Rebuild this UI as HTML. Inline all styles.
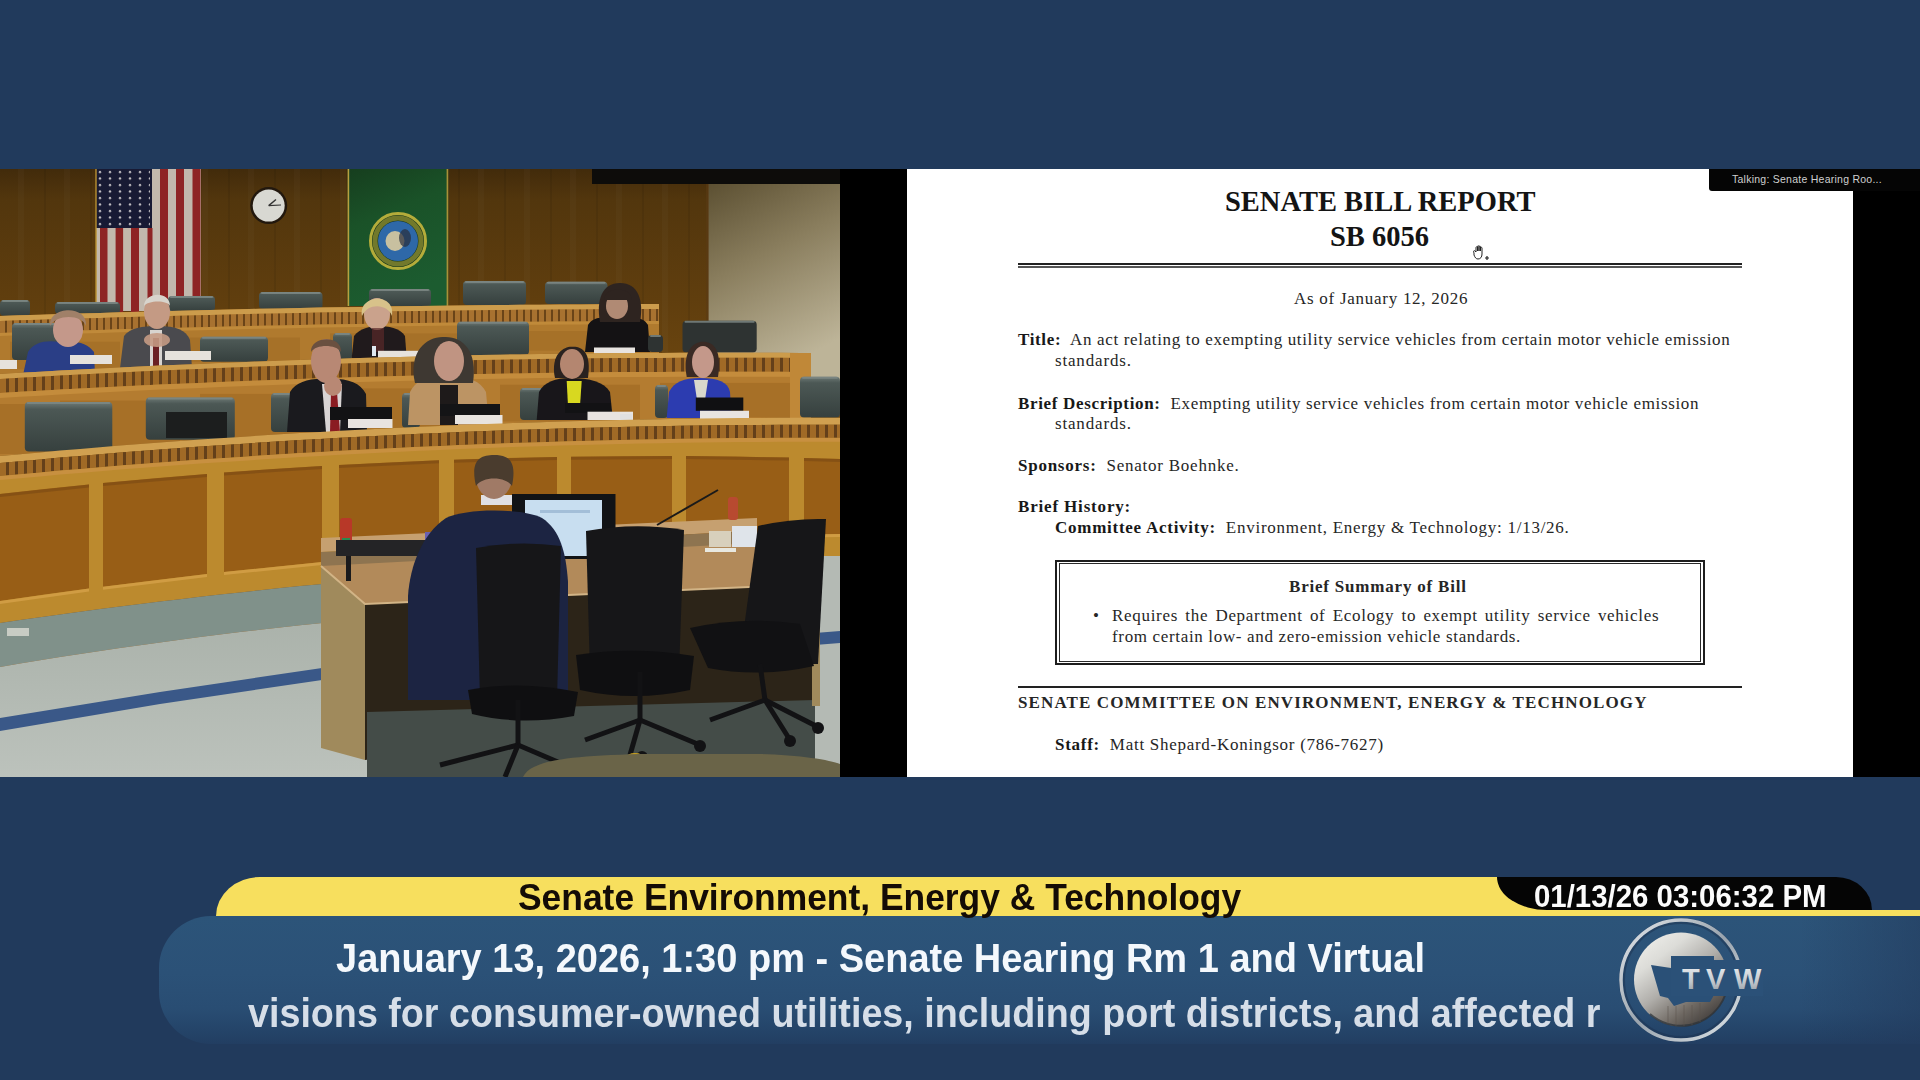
<!DOCTYPE html>
<html><head><meta charset="utf-8">
<style>
*{margin:0;padding:0;box-sizing:border-box}
html,body{width:1920px;height:1080px;overflow:hidden;background:#213a5c}
body{position:relative;font-family:"Liberation Sans",sans-serif}
.a{position:absolute}
#bg{left:0;top:0;width:1920px;height:1080px;background:#213a5c}
/* photo */
#photo{left:0;top:169px;width:840px;height:608px;overflow:hidden;background:#7a4a14}
#photo div{position:absolute}
#psvg{filter:blur(0.6px)}
/* right video */
#rv{left:840px;top:169px;width:1080px;height:608px;background:#000;overflow:hidden}
#page{left:907px;top:169px;width:946px;height:608px;background:#fff}
.doc{font-family:"Liberation Serif",serif;color:#262626;white-space:nowrap}
#d1,#d2{color:#141414}
.doc b{font-weight:bold;color:#181818}
#talk{left:1709px;top:169px;width:211px;height:22px;background:#050505;border-bottom-left-radius:3px}
#talkt{left:1732px;top:173px;font-size:10.5px;letter-spacing:0.25px;color:#d0d0d0;white-space:nowrap;font-family:"Liberation Sans",sans-serif}
/* lower third */
.l3{white-space:nowrap;font-weight:bold;font-family:"Liberation Sans",sans-serif}
</style></head><body>
<div id="bg" class="a"></div>

<div id="photo" class="a">
<svg class="a" id="psvg" style="left:0;top:0" width="840" height="608" viewBox="0 169 840 608">
<defs>
<linearGradient id="wall" x1="0" y1="0" x2="0" y2="1"><stop offset="0" stop-color="#422b0b"/><stop offset="0.05" stop-color="#52360d"/><stop offset="0.215" stop-color="#603e0e"/><stop offset="0.41" stop-color="#724a10"/><stop offset="1" stop-color="#8a5618"/></linearGradient>
<linearGradient id="cream" x1="0" y1="0" x2="0.35" y2="1"><stop offset="0" stop-color="#5c5032"/><stop offset="0.45" stop-color="#8a7e5e"/><stop offset="1" stop-color="#bdb498"/></linearGradient>
<linearGradient id="green" x1="0" y1="0" x2="0.3" y2="1"><stop offset="0" stop-color="#163e1e"/><stop offset="0.4" stop-color="#1a5228"/><stop offset="1" stop-color="#1c5c30"/></linearGradient>
<linearGradient id="chair" x1="0" y1="0" x2="0" y2="1"><stop offset="0" stop-color="#6e7a76"/><stop offset="0.15" stop-color="#4c5855"/><stop offset="1" stop-color="#36403e"/></linearGradient>
<linearGradient id="rail" x1="0" y1="0" x2="0" y2="1"><stop offset="0" stop-color="#d8a850"/><stop offset="0.3" stop-color="#c89440"/><stop offset="1" stop-color="#b07a2c"/></linearGradient>
<linearGradient id="floor" x1="0" y1="0" x2="0" y2="1"><stop offset="0" stop-color="#a8b0a8"/><stop offset="1" stop-color="#bcc2bc"/></linearGradient>
<pattern id="dent" x="0" y="0" width="9" height="40" patternUnits="userSpaceOnUse"><rect width="9" height="40" fill="#a06a26"/><rect x="6" width="3" height="40" fill="#64401a"/></pattern>
<pattern id="dent2" x="0" y="0" width="7" height="40" patternUnits="userSpaceOnUse"><rect width="7" height="40" fill="#a87230"/><rect x="5" width="2" height="40" fill="#6a4418"/></pattern>
<pattern id="stars" x="96" y="169" width="10" height="6.5" patternUnits="userSpaceOnUse"><circle cx="4" cy="3" r="1.2" fill="#c8c4c8"/></pattern>
<pattern id="grain" x="0" y="0" width="46" height="600" patternUnits="userSpaceOnUse"><rect width="46" height="600" fill="none"/><rect x="44" width="2" height="600" fill="#000" opacity="0.07"/><rect x="18" width="6" height="600" fill="#fff" opacity="0.02"/></pattern>
</defs>
<!-- back wall -->
<rect x="0" y="169" width="840" height="608" fill="url(#wall)"/>
<rect x="0" y="169" width="708" height="260" fill="url(#grain)"/>
<rect x="592" y="169" width="248" height="15" fill="#0d0c0a"/>
<rect x="708" y="184" width="132" height="200" fill="url(#cream)"/>
<rect x="706" y="184" width="3" height="200" fill="#5a3a14" opacity="0.6"/>
<!-- US flag -->
<rect x="96" y="169" width="105" height="142" fill="#c2b8ac"/>
<g fill="#8e2424">
<rect x="160" y="169" width="8" height="140"/><rect x="176" y="169" width="8" height="140"/><rect x="192.5" y="169" width="8" height="138"/>
<rect x="100" y="228" width="7.5" height="84"/><rect x="115.6" y="228" width="7.5" height="84"/><rect x="131" y="228" width="8" height="84"/><rect x="147.5" y="228" width="5" height="84"/>
</g>
<rect x="96" y="169" width="56" height="59" fill="#181a34"/>
<rect x="98" y="170" width="52" height="56" fill="url(#stars)"/>
<rect x="95" y="169" width="2" height="143" fill="#b89030" opacity="0.7"/>
<!-- clock -->
<circle cx="268.7" cy="205.6" r="18.5" fill="#22180e"/>
<circle cx="268.7" cy="205.6" r="16" fill="#d8d8d2"/>
<line x1="268.7" y1="205.6" x2="276" y2="199.5" stroke="#333" stroke-width="1.4"/>
<line x1="268.7" y1="205.6" x2="281" y2="205" stroke="#333" stroke-width="1.2"/>
<!-- WA flag -->
<rect x="347.6" y="169" width="100.6" height="137" fill="url(#green)"/>
<rect x="347.6" y="169" width="1.6" height="137" fill="#b8a040"/>
<rect x="446.6" y="169" width="1.6" height="137" fill="#a89038"/>
<circle cx="398" cy="241" r="28.3" fill="#141a10" opacity="0.5"/>
<circle cx="398" cy="241" r="27.5" fill="none" stroke="#b4ac3a" stroke-width="3"/>
<circle cx="398" cy="241" r="23" fill="none" stroke="#8a8a30" stroke-width="5" opacity="0.8"/>
<circle cx="398" cy="241" r="20" fill="#2e68a8"/>
<ellipse cx="395" cy="241" rx="9.5" ry="10" fill="#c8c0a0"/>
<ellipse cx="405" cy="238" rx="6" ry="9" fill="#2a2e3a" opacity="0.7"/>
<rect x="0" y="300" width="30" height="16" rx="4" fill="url(#chair)"/>
<rect x="2" y="300" width="26" height="2" rx="1" fill="#7e8a86" opacity="0.8"/>
<rect x="55" y="302" width="65" height="12" rx="4" fill="url(#chair)"/>
<rect x="57" y="302" width="61" height="2" rx="1" fill="#7e8a86" opacity="0.8"/>
<rect x="168" y="296" width="47" height="15" rx="4" fill="url(#chair)"/>
<rect x="170" y="296" width="43" height="2" rx="1" fill="#7e8a86" opacity="0.8"/>
<rect x="259" y="292" width="63.5" height="17" rx="4" fill="url(#chair)"/>
<rect x="261" y="292" width="59.5" height="2" rx="1" fill="#7e8a86" opacity="0.8"/>
<rect x="369" y="289" width="62" height="17" rx="4" fill="url(#chair)"/>
<rect x="371" y="289" width="58" height="2" rx="1" fill="#7e8a86" opacity="0.8"/>
<rect x="463" y="281" width="63" height="24" rx="4" fill="url(#chair)"/>
<rect x="465" y="281" width="59" height="2" rx="1" fill="#7e8a86" opacity="0.8"/>
<rect x="545" y="281.7" width="62.5" height="22.30000000000001" rx="4" fill="url(#chair)"/>
<rect x="547" y="281.7" width="58.5" height="2" rx="1" fill="#7e8a86" opacity="0.8"/>
<polygon points="0.0,316.0 20.0,315.3 40.0,314.7 60.0,314.1 80.0,313.5 100.0,312.9 120.0,312.3 140.0,311.7 160.0,311.2 180.0,310.7 200.0,310.2 220.0,309.7 240.0,309.3 260.0,308.8 280.0,308.4 300.0,308.0 320.0,307.6 340.0,307.3 360.0,306.9 380.0,306.6 400.0,306.3 420.0,306.0 440.0,305.7 460.0,305.5 480.0,305.2 500.0,305.0 520.0,304.8 540.0,304.7 560.0,304.5 580.0,304.4 600.0,304.2 620.0,304.1 640.0,304.1 659.0,304.0 659.0,352.9 640.0,353.0 620.0,353.1 600.0,353.3 580.0,353.5 560.0,353.8 540.0,354.1 520.0,354.4 500.0,354.7 480.0,355.1 460.0,355.5 440.0,356.0 420.0,356.4 400.0,357.0 380.0,357.5 360.0,358.1 340.0,358.7 320.0,359.3 300.0,360.0 280.0,360.7 260.0,361.4 240.0,362.2 220.0,363.0 200.0,363.9 180.0,364.7 160.0,365.6 140.0,366.6 120.0,367.5 100.0,368.5 80.0,369.6 60.0,370.6 40.0,371.7 20.0,372.8 0.0,374.0" fill="#b07a2e" />
<polygon points="0.0,316.0 20.0,315.3 40.0,314.7 60.0,314.1 80.0,313.5 100.0,312.9 120.0,312.3 140.0,311.7 160.0,311.2 180.0,310.7 200.0,310.2 220.0,309.7 240.0,309.3 260.0,308.8 280.0,308.4 300.0,308.0 320.0,307.6 340.0,307.3 360.0,306.9 380.0,306.6 400.0,306.3 420.0,306.0 440.0,305.7 460.0,305.5 480.0,305.2 500.0,305.0 520.0,304.8 540.0,304.7 560.0,304.5 580.0,304.4 600.0,304.2 620.0,304.1 640.0,304.1 659.0,304.0 659.0,309.0 640.0,309.1 620.0,309.1 600.0,309.2 580.0,309.4 560.0,309.5 540.0,309.7 520.0,309.8 500.0,310.0 480.0,310.2 460.0,310.5 440.0,310.7 420.0,311.0 400.0,311.3 380.0,311.6 360.0,311.9 340.0,312.3 320.0,312.6 300.0,313.0 280.0,313.4 260.0,313.8 240.0,314.3 220.0,314.7 200.0,315.2 180.0,315.7 160.0,316.2 140.0,316.7 120.0,317.3 100.0,317.9 80.0,318.5 60.0,319.1 40.0,319.7 20.0,320.3 0.0,321.0" fill="#cc9c4c" />
<polygon points="0.0,321.0 20.0,320.3 40.0,319.7 60.0,319.1 80.0,318.5 100.0,317.9 120.0,317.3 140.0,316.7 160.0,316.2 180.0,315.7 200.0,315.2 220.0,314.7 240.0,314.3 260.0,313.8 280.0,313.4 300.0,313.0 320.0,312.6 340.0,312.3 360.0,311.9 380.0,311.6 400.0,311.3 420.0,311.0 440.0,310.7 460.0,310.5 480.0,310.2 500.0,310.0 520.0,309.8 540.0,309.7 560.0,309.5 580.0,309.4 600.0,309.2 620.0,309.1 640.0,309.1 659.0,309.0 659.0,321.0 640.0,321.1 620.0,321.1 600.0,321.2 580.0,321.4 560.0,321.5 540.0,321.7 520.0,321.8 500.0,322.0 480.0,322.2 460.0,322.5 440.0,322.7 420.0,323.0 400.0,323.3 380.0,323.6 360.0,323.9 340.0,324.3 320.0,324.6 300.0,325.0 280.0,325.4 260.0,325.8 240.0,326.3 220.0,326.7 200.0,327.2 180.0,327.7 160.0,328.2 140.0,328.7 120.0,329.3 100.0,329.9 80.0,330.5 60.0,331.1 40.0,331.7 20.0,332.3 0.0,333.0" fill="url(#dent2)" />
<polygon points="0.0,333.0 20.0,332.3 40.0,331.7 60.0,331.1 80.0,330.5 100.0,329.9 120.0,329.3 140.0,328.7 160.0,328.2 180.0,327.7 200.0,327.2 220.0,326.7 240.0,326.3 260.0,325.8 280.0,325.4 300.0,325.0 320.0,324.6 340.0,324.3 360.0,323.9 380.0,323.6 400.0,323.3 420.0,323.0 440.0,322.7 460.0,322.5 480.0,322.2 500.0,322.0 520.0,321.8 540.0,321.7 560.0,321.5 580.0,321.4 600.0,321.2 620.0,321.1 640.0,321.1 659.0,321.0 659.0,324.0 640.0,324.1 620.0,324.1 600.0,324.2 580.0,324.4 560.0,324.5 540.0,324.7 520.0,324.8 500.0,325.0 480.0,325.2 460.0,325.5 440.0,325.7 420.0,326.0 400.0,326.3 380.0,326.6 360.0,326.9 340.0,327.3 320.0,327.6 300.0,328.0 280.0,328.4 260.0,328.8 240.0,329.3 220.0,329.7 200.0,330.2 180.0,330.7 160.0,331.2 140.0,331.7 120.0,332.3 100.0,332.9 80.0,333.5 60.0,334.1 40.0,334.7 20.0,335.3 0.0,336.0" fill="#c08a3a" />
<rect x="10" y="341.7" width="110" height="27.8" fill="#a06a24" opacity="0.6"/>
<rect x="150" y="337.5" width="150" height="24.6" fill="#a06a24" opacity="0.6"/>
<rect x="330" y="333.4" width="140" height="21.6" fill="#a06a24" opacity="0.6"/>
<rect x="500" y="331.0" width="140" height="19.7" fill="#a06a24" opacity="0.6"/>
<path d="M585,352 L588,325 C592,318 600,316 618,318 C636,316 644,318 648,325 L650,352 Z" fill="#141214"/>
<path d="M600,322 C596,300 602,283 620,283 C638,283 644,300 640,322 Z" fill="#2e2420"/>
<ellipse cx="617" cy="306" rx="11" ry="13" fill="#b08a74"/>
<path d="M604,300 C604,286 632,286 632,300 Z" fill="#2e2420"/>
<rect x="594" y="347.5" width="41" height="7" fill="#e8e4e0"/>
<rect x="682.5" y="320.8" width="74.20000000000005" height="31.69999999999999" rx="4" fill="#2e3332"/>
<rect x="684.5" y="320.8" width="70.20000000000005" height="2" rx="1" fill="#7e8a86" opacity="0.8"/>
<rect x="648" y="335" width="15" height="17" rx="4" fill="#2e3332"/>
<rect x="650" y="335" width="11" height="2" rx="1" fill="#7e8a86" opacity="0.8"/>
<rect x="12" y="323" width="50" height="37" rx="4" fill="url(#chair)"/>
<rect x="14" y="323" width="46" height="2" rx="1" fill="#7e8a86" opacity="0.8"/>
<rect x="200" y="336.7" width="68" height="25.0" rx="4" fill="url(#chair)"/>
<rect x="202" y="336.7" width="64" height="2" rx="1" fill="#7e8a86" opacity="0.8"/>
<rect x="333" y="333" width="19" height="27" rx="4" fill="url(#chair)"/>
<rect x="335" y="333" width="15" height="2" rx="1" fill="#7e8a86" opacity="0.8"/>
<rect x="457" y="321.7" width="72" height="33.30000000000001" rx="4" fill="url(#chair)"/>
<rect x="459" y="321.7" width="68" height="2" rx="1" fill="#7e8a86" opacity="0.8"/>
<path d="M120,368 L124,336 C130,328 142,326 158,326 C176,326 186,330 190,340 L192,368 Z" fill="#4a4a4e"/>
<rect x="150" y="330" width="12" height="36" fill="#d8d4d0"/>
<rect x="153" y="338" width="6" height="28" fill="#6a2024"/>
<ellipse cx="157" cy="312" rx="13" ry="17" fill="#c49a84"/>
<path d="M144,306 C144,292 170,290 170,306 C168,300 148,300 144,306 Z" fill="#d8d4cc"/>
<ellipse cx="157" cy="340" rx="13" ry="7" fill="#c49a84" opacity="0.9"/>
<path d="M23,375 L28,352 C34,342 46,340 60,342 C78,340 88,344 94,352 L95,375 Z" fill="#2a3e86"/>
<ellipse cx="68" cy="330" rx="15" ry="17" fill="#c4988a"/>
<path d="M50,326 C48,306 88,304 86,326 C82,314 56,314 50,326 Z" fill="#a08068"/>
<path d="M351.7,358 L354,336 C360,328 372,326 378,326 C388,326 400,328 405,336 L406.7,358 Z" fill="#201a1c"/>
<ellipse cx="377" cy="314" rx="13" ry="16" fill="#caa28c"/>
<path d="M362,316 C358,294 396,292 392,316 C388,304 368,302 362,316 Z" fill="#d8c28a"/>
<rect x="372" y="328" width="12" height="24" fill="#5a2a2a" opacity="0.7"/>
<rect x="378" y="350.8" width="42" height="9" fill="#e6e2dc"/>
<rect x="372" y="346" width="4" height="10" fill="#dfe8f0"/>
<rect x="70" y="355" width="42" height="9" fill="#e6e2dc"/>
<rect x="165" y="351" width="46" height="9" fill="#e6e2dc"/>
<rect x="0" y="360" width="17" height="9" fill="#e6e2dc"/>
<polygon points="0.0,374.0 20.0,372.8 40.0,371.7 60.0,370.6 80.0,369.6 100.0,368.5 120.0,367.5 140.0,366.6 160.0,365.6 180.0,364.7 200.0,363.9 220.0,363.0 240.0,362.2 260.0,361.4 280.0,360.7 300.0,360.0 320.0,359.3 340.0,358.7 360.0,358.1 380.0,357.5 400.0,357.0 420.0,356.4 440.0,356.0 460.0,355.5 480.0,355.1 500.0,354.7 520.0,354.4 540.0,354.1 560.0,353.8 580.0,353.5 600.0,353.3 620.0,353.1 640.0,353.0 660.0,352.9 680.0,352.8 700.0,352.7 720.0,352.7 740.0,352.7 760.0,352.7 780.0,352.8 800.0,352.9 811.0,353.0 811.0,417.7 800.0,417.7 780.0,417.8 760.0,417.9 740.0,418.1 720.0,418.3 700.0,418.5 680.0,418.8 660.0,419.2 640.0,419.5 620.0,420.0 600.0,420.5 580.0,421.0 560.0,421.5 540.0,422.2 520.0,422.8 500.0,423.5 480.0,424.3 460.0,425.1 440.0,425.9 420.0,426.8 400.0,427.7 380.0,428.7 360.0,429.8 340.0,430.8 320.0,431.9 300.0,433.1 280.0,434.3 260.0,435.6 240.0,436.9 220.0,438.2 200.0,439.6 180.0,441.0 160.0,442.5 140.0,444.0 120.0,445.6 100.0,447.2 80.0,448.9 60.0,450.6 40.0,452.4 20.0,454.2 0.0,456.0" fill="#b47c30" />
<polygon points="0.0,374.0 20.0,372.8 40.0,371.7 60.0,370.6 80.0,369.6 100.0,368.5 120.0,367.5 140.0,366.6 160.0,365.6 180.0,364.7 200.0,363.9 220.0,363.0 240.0,362.2 260.0,361.4 280.0,360.7 300.0,360.0 320.0,359.3 340.0,358.7 360.0,358.1 380.0,357.5 400.0,357.0 420.0,356.4 440.0,356.0 460.0,355.5 480.0,355.1 500.0,354.7 520.0,354.4 540.0,354.1 560.0,353.8 580.0,353.5 600.0,353.3 620.0,353.1 640.0,353.0 660.0,352.9 680.0,352.8 700.0,352.7 720.0,352.7 740.0,352.7 760.0,352.7 780.0,352.8 800.0,352.9 811.0,353.0 811.0,358.0 800.0,357.9 780.0,357.8 760.0,357.7 740.0,357.7 720.0,357.7 700.0,357.7 680.0,357.8 660.0,357.9 640.0,358.0 620.0,358.1 600.0,358.3 580.0,358.5 560.0,358.8 540.0,359.1 520.0,359.4 500.0,359.7 480.0,360.1 460.0,360.5 440.0,361.0 420.0,361.4 400.0,362.0 380.0,362.5 360.0,363.1 340.0,363.7 320.0,364.3 300.0,365.0 280.0,365.7 260.0,366.4 240.0,367.2 220.0,368.0 200.0,368.9 180.0,369.7 160.0,370.6 140.0,371.6 120.0,372.5 100.0,373.5 80.0,374.6 60.0,375.6 40.0,376.7 20.0,377.8 0.0,379.0" fill="#cc9c4c" />
<polygon points="0.0,379.0 20.0,377.8 40.0,376.7 60.0,375.6 80.0,374.6 100.0,373.5 120.0,372.5 140.0,371.6 160.0,370.6 180.0,369.7 200.0,368.9 220.0,368.0 240.0,367.2 260.0,366.4 280.0,365.7 300.0,365.0 320.0,364.3 340.0,363.7 360.0,363.1 380.0,362.5 400.0,362.0 420.0,361.4 440.0,361.0 460.0,360.5 480.0,360.1 500.0,359.7 520.0,359.4 540.0,359.1 560.0,358.8 580.0,358.5 600.0,358.3 620.0,358.1 640.0,358.0 660.0,357.9 680.0,357.8 700.0,357.7 720.0,357.7 740.0,357.7 760.0,357.7 780.0,357.8 800.0,357.9 811.0,358.0 811.0,372.0 800.0,371.9 780.0,371.8 760.0,371.7 740.0,371.7 720.0,371.7 700.0,371.7 680.0,371.8 660.0,371.9 640.0,372.0 620.0,372.1 600.0,372.3 580.0,372.5 560.0,372.8 540.0,373.1 520.0,373.4 500.0,373.7 480.0,374.1 460.0,374.5 440.0,375.0 420.0,375.4 400.0,376.0 380.0,376.5 360.0,377.1 340.0,377.7 320.0,378.3 300.0,379.0 280.0,379.7 260.0,380.4 240.0,381.2 220.0,382.0 200.0,382.9 180.0,383.7 160.0,384.6 140.0,385.6 120.0,386.5 100.0,387.5 80.0,388.6 60.0,389.6 40.0,390.7 20.0,391.8 0.0,393.0" fill="url(#dent)" />
<polygon points="0.0,393.0 20.0,391.8 40.0,390.7 60.0,389.6 80.0,388.6 100.0,387.5 120.0,386.5 140.0,385.6 160.0,384.6 180.0,383.7 200.0,382.9 220.0,382.0 240.0,381.2 260.0,380.4 280.0,379.7 300.0,379.0 320.0,378.3 340.0,377.7 360.0,377.1 380.0,376.5 400.0,376.0 420.0,375.4 440.0,375.0 460.0,374.5 480.0,374.1 500.0,373.7 520.0,373.4 540.0,373.1 560.0,372.8 580.0,372.5 600.0,372.3 620.0,372.1 640.0,372.0 660.0,371.9 680.0,371.8 700.0,371.7 720.0,371.7 740.0,371.7 760.0,371.7 780.0,371.8 800.0,371.9 811.0,372.0 811.0,377.0 800.0,376.9 780.0,376.8 760.0,376.7 740.0,376.7 720.0,376.7 700.0,376.7 680.0,376.8 660.0,376.9 640.0,377.0 620.0,377.1 600.0,377.3 580.0,377.5 560.0,377.8 540.0,378.1 520.0,378.4 500.0,378.7 480.0,379.1 460.0,379.5 440.0,380.0 420.0,380.4 400.0,381.0 380.0,381.5 360.0,382.1 340.0,382.7 320.0,383.3 300.0,384.0 280.0,384.7 260.0,385.4 240.0,386.2 220.0,387.0 200.0,387.9 180.0,388.7 160.0,389.6 140.0,390.6 120.0,391.5 100.0,392.5 80.0,393.6 60.0,394.6 40.0,395.7 20.0,396.8 0.0,398.0" fill="#c48c3c" />
<rect x="0" y="404.0" width="45" height="50.0" fill="#9c6620" opacity="0.55"/>
<rect x="60" y="400.6" width="120" height="48.0" fill="#9c6620" opacity="0.55"/>
<rect x="200" y="393.9" width="130" height="43.7" fill="#9c6620" opacity="0.55"/>
<rect x="350" y="388.4" width="130" height="39.9" fill="#9c6620" opacity="0.55"/>
<rect x="500" y="384.7" width="140" height="36.8" fill="#9c6620" opacity="0.55"/>
<rect x="660" y="382.9" width="130" height="34.3" fill="#9c6620" opacity="0.55"/>
<rect x="790" y="353" width="21" height="70" fill="#c08838"/>
<rect x="24.8" y="402" width="87.5" height="49.5" rx="4" fill="url(#chair)"/>
<rect x="26.8" y="402" width="83.5" height="2" rx="1" fill="#7e8a86" opacity="0.8"/>
<rect x="145.8" y="397.5" width="89.0" height="42.30000000000001" rx="4" fill="url(#chair)"/>
<rect x="147.8" y="397.5" width="85.0" height="2" rx="1" fill="#7e8a86" opacity="0.8"/>
<rect x="271" y="393" width="21" height="39" rx="4" fill="url(#chair)"/>
<rect x="273" y="393" width="17" height="2" rx="1" fill="#7e8a86" opacity="0.8"/>
<rect x="402" y="393" width="18" height="35" rx="4" fill="url(#chair)"/>
<rect x="404" y="393" width="14" height="2" rx="1" fill="#7e8a86" opacity="0.8"/>
<rect x="520" y="388" width="25" height="32" rx="4" fill="url(#chair)"/>
<rect x="522" y="388" width="21" height="2" rx="1" fill="#7e8a86" opacity="0.8"/>
<rect x="655" y="385" width="13" height="33" rx="4" fill="url(#chair)"/>
<rect x="657" y="385" width="9" height="2" rx="1" fill="#7e8a86" opacity="0.8"/>
<rect x="800" y="376.7" width="40" height="40.80000000000001" rx="4" fill="url(#chair)"/>
<rect x="802" y="376.7" width="36" height="2" rx="1" fill="#7e8a86" opacity="0.8"/>
<rect x="166" y="412" width="61" height="26" fill="#1c1e1e"/>
<path d="M287,432 L290,392 C296,382 310,378 326,379 C346,378 360,382 366,394 L367,432 Z" fill="#1a1a1e"/>
<polygon points="322,384 342,384 340,432 326,432" fill="#d8d4d4"/>
<polygon points="331,392 337,392 340,432 330,432" fill="#8a1c22"/>
<ellipse cx="326" cy="361" rx="15" ry="22" fill="#b88874"/>
<path d="M311,352 C310,336 342,334 341,352 C336,344 316,344 311,352 Z" fill="#6a5040"/>
<ellipse cx="333" cy="386" rx="9" ry="10" fill="#b88874"/>
<rect x="330" y="407" width="62" height="13" fill="#121214"/>
<rect x="348" y="419" width="44.5" height="9" fill="#e8e4e0"/>
<path d="M408,425 L410,392 C416,380 428,376 446,377 C466,376 480,380 486,392 L489,425 Z" fill="#bc9464"/>
<path d="M415,383 C408,350 428,336 444,337 C462,336 478,350 473,383 Z" fill="#3e3832"/>
<ellipse cx="449" cy="361" rx="15" ry="20" fill="#c09482"/>
<rect x="440" y="385" width="18" height="40" fill="#1e1a1a"/>
<rect x="440" y="404" width="60" height="12" fill="#141416"/>
<rect x="455" y="415" width="47.5" height="9" fill="#e8e4e0"/>
<path d="M536.7,420 L539,392 C544,382 556,378 570,378 C590,378 604,382 610,392 L613,420 Z" fill="#18161a"/>
<polygon points="566.7,381 581.7,381 580,406 568,406" fill="#d8d820"/>
<path d="M555,378 C550,352 566,346 572,346.7 C582,346 592,352 588,378 Z" fill="#2a2220"/>
<ellipse cx="572" cy="364" rx="12" ry="15" fill="#b48670"/>
<rect x="565" y="403" width="46" height="10" fill="#121214"/>
<rect x="587.5" y="411.7" width="45.5" height="8.3" fill="#e8e4e0"/>
<path d="M666.7,418 L669,392 C674,382 684,378 700,378 C718,378 728,382 730,392 L731.7,418 Z" fill="#2c3cb0"/>
<polygon points="694,380 708,380 705,400 697,400" fill="#d8d8cc"/>
<path d="M686.7,377 C682,350 694,341.7 703,341.7 C714,341.7 722,350 718,377 Z" fill="#3a2a24"/>
<ellipse cx="703" cy="362" rx="11" ry="16" fill="#c4988a"/>
<rect x="695.8" y="397.5" width="47.5" height="13.3" fill="#101012"/>
<rect x="700" y="410.8" width="49" height="8.2" fill="#e8e4e0"/>
<rect x="620" y="414" width="12" height="6" fill="#e0e0e0"/>
<rect x="0" y="0" width="0" height="0"/>
<polygon points="0.0,476.0 20.0,474.2 40.0,472.4 60.0,470.6 80.0,468.9 100.0,467.2 120.0,465.6 140.0,464.0 160.0,462.5 180.0,461.0 200.0,459.6 220.0,458.2 240.0,456.9 260.0,455.6 280.0,454.3 300.0,453.1 320.0,451.9 340.0,450.8 360.0,449.8 380.0,448.7 400.0,447.7 420.0,446.8 440.0,445.9 460.0,445.1 480.0,444.3 500.0,443.5 520.0,442.8 540.0,442.2 560.0,441.5 580.0,441.0 600.0,440.5 620.0,440.0 640.0,439.5 660.0,439.2 680.0,438.8 700.0,438.5 720.0,438.3 740.0,438.1 760.0,437.9 780.0,437.8 800.0,437.7 820.0,437.7 840.0,437.7 840.0,556.0 820.0,556.3 800.0,556.6 780.0,557.0 760.0,557.5 740.0,558.1 720.0,558.7 700.0,559.3 680.0,560.1 660.0,560.9 640.0,561.7 620.0,562.7 600.0,563.6 580.0,564.7 560.0,565.8 540.0,567.0 520.0,568.2 500.0,569.5 480.0,570.9 460.0,572.4 440.0,573.9 420.0,575.4 400.0,577.0 380.0,578.7 360.0,580.5 340.0,582.3 320.0,584.2 300.0,586.1 280.0,588.1 260.0,590.2 240.0,592.4 220.0,594.6 200.0,596.8 180.0,599.2 160.0,601.6 140.0,604.0 120.0,606.5 100.0,609.1 80.0,611.8 60.0,614.5 40.0,617.3 20.0,620.1 0.0,623.0" fill="#bc8a2e" />
<polygon points="0.0,494.0 44.5,489.0 89.0,484.4 89.0,588.6 44.5,594.6 0.0,601.0" fill="#985e16"/>
<polygon points="0.0,601.0 89.0,588.6 89.0,591.6 0.0,604.0" fill="#d4a048" opacity="0.8"/>
<polygon points="0.0,494.0 89.0,484.4 89.0,487.4 0.0,497.0" fill="#7a4a14" opacity="0.6"/>
<polygon points="103.0,483.0 155.0,478.2 207.0,473.9 207.0,574.0 155.0,580.2 103.0,586.7" fill="#985e16"/>
<polygon points="103.0,586.7 207.0,574.0 207.0,577.0 103.0,589.7" fill="#d4a048" opacity="0.8"/>
<polygon points="103.0,483.0 207.0,473.9 207.0,476.9 103.0,486.0" fill="#7a4a14" opacity="0.6"/>
<polygon points="224.0,472.5 273.0,469.0 322.0,465.9 322.0,562.0 273.0,566.9 224.0,572.1" fill="#985e16"/>
<polygon points="224.0,572.1 322.0,562.0 322.0,565.0 224.0,575.1" fill="#d4a048" opacity="0.8"/>
<polygon points="224.0,472.5 322.0,465.9 322.0,468.9 224.0,475.5" fill="#7a4a14" opacity="0.6"/>
<polygon points="339.0,465.0 389.0,462.4 439.0,460.2 439.0,551.9 389.0,556.0 339.0,560.4" fill="#985e16"/>
<polygon points="339.0,560.4 439.0,551.9 439.0,554.9 339.0,563.4" fill="#d4a048" opacity="0.8"/>
<polygon points="339.0,465.0 439.0,460.2 439.0,463.2 339.0,468.0" fill="#7a4a14" opacity="0.6"/>
<polygon points="454.0,459.7 505.5,458.1 557.0,456.9 557.0,544.0 505.5,547.2 454.0,550.8" fill="#985e16"/>
<polygon points="454.0,550.8 557.0,544.0 557.0,547.0 454.0,553.8" fill="#d4a048" opacity="0.8"/>
<polygon points="454.0,459.7 557.0,456.9 557.0,459.9 454.0,462.7" fill="#7a4a14" opacity="0.6"/>
<polygon points="571.0,456.7 621.5,456.2 672.0,456.1 672.0,538.4 621.5,540.6 571.0,543.2" fill="#985e16"/>
<polygon points="571.0,543.2 672.0,538.4 672.0,541.4 571.0,546.2" fill="#d4a048" opacity="0.8"/>
<polygon points="571.0,456.7 672.0,456.1 672.0,459.1 571.0,459.7" fill="#7a4a14" opacity="0.6"/>
<polygon points="686.0,456.1 737.5,456.6 789.0,457.6 789.0,534.9 737.5,536.1 686.0,537.8" fill="#985e16"/>
<polygon points="686.0,537.8 789.0,534.9 789.0,537.9 686.0,540.8" fill="#d4a048" opacity="0.8"/>
<polygon points="686.0,456.1 789.0,457.6 789.0,460.6 686.0,459.1" fill="#7a4a14" opacity="0.6"/>
<polygon points="804.0,458.0 822.0,458.4 840.0,459.0 840.0,534.0 822.0,534.3 804.0,534.6" fill="#985e16"/>
<polygon points="804.0,534.6 840.0,534.0 840.0,537.0 804.0,537.6" fill="#d4a048" opacity="0.8"/>
<polygon points="804.0,458.0 840.0,459.0 840.0,462.0 804.0,461.0" fill="#7a4a14" opacity="0.6"/>
<polygon points="0.0,456.0 20.0,454.2 40.0,452.4 60.0,450.6 80.0,448.9 100.0,447.2 120.0,445.6 140.0,444.0 160.0,442.5 180.0,441.0 200.0,439.6 220.0,438.2 240.0,436.9 260.0,435.6 280.0,434.3 300.0,433.1 320.0,431.9 340.0,430.8 360.0,429.8 380.0,428.7 400.0,427.7 420.0,426.8 440.0,425.9 460.0,425.1 480.0,424.3 500.0,423.5 520.0,422.8 540.0,422.2 560.0,421.5 580.0,421.0 600.0,420.5 620.0,420.0 640.0,419.5 660.0,419.2 680.0,418.8 700.0,418.5 720.0,418.3 740.0,418.1 760.0,417.9 780.0,417.8 800.0,417.7 820.0,417.7 840.0,417.7 840.0,424.7 820.0,424.7 800.0,424.7 780.0,424.8 760.0,424.9 740.0,425.1 720.0,425.3 700.0,425.5 680.0,425.8 660.0,426.2 640.0,426.5 620.0,427.0 600.0,427.5 580.0,428.0 560.0,428.5 540.0,429.2 520.0,429.8 500.0,430.5 480.0,431.3 460.0,432.1 440.0,432.9 420.0,433.8 400.0,434.7 380.0,435.7 360.0,436.8 340.0,437.8 320.0,438.9 300.0,440.1 280.0,441.3 260.0,442.6 240.0,443.9 220.0,445.2 200.0,446.6 180.0,448.0 160.0,449.5 140.0,451.0 120.0,452.6 100.0,454.2 80.0,455.9 60.0,457.6 40.0,459.4 20.0,461.2 0.0,463.0" fill="#d0a050" />
<polygon points="0.0,463.0 20.0,461.2 40.0,459.4 60.0,457.6 80.0,455.9 100.0,454.2 120.0,452.6 140.0,451.0 160.0,449.5 180.0,448.0 200.0,446.6 220.0,445.2 240.0,443.9 260.0,442.6 280.0,441.3 300.0,440.1 320.0,438.9 340.0,437.8 360.0,436.8 380.0,435.7 400.0,434.7 420.0,433.8 440.0,432.9 460.0,432.1 480.0,431.3 500.0,430.5 520.0,429.8 540.0,429.2 560.0,428.5 580.0,428.0 600.0,427.5 620.0,427.0 640.0,426.5 660.0,426.2 680.0,425.8 700.0,425.5 720.0,425.3 740.0,425.1 760.0,424.9 780.0,424.8 800.0,424.7 820.0,424.7 840.0,424.7 840.0,437.7 820.0,437.7 800.0,437.7 780.0,437.8 760.0,437.9 740.0,438.1 720.0,438.3 700.0,438.5 680.0,438.8 660.0,439.2 640.0,439.5 620.0,440.0 600.0,440.5 580.0,441.0 560.0,441.5 540.0,442.2 520.0,442.8 500.0,443.5 480.0,444.3 460.0,445.1 440.0,445.9 420.0,446.8 400.0,447.7 380.0,448.7 360.0,449.8 340.0,450.8 320.0,451.9 300.0,453.1 280.0,454.3 260.0,455.6 240.0,456.9 220.0,458.2 200.0,459.6 180.0,461.0 160.0,462.5 140.0,464.0 120.0,465.6 100.0,467.2 80.0,468.9 60.0,470.6 40.0,472.4 20.0,474.2 0.0,476.0" fill="url(#dent)" />
<polygon points="0.0,476.0 20.0,474.2 40.0,472.4 60.0,470.6 80.0,468.9 100.0,467.2 120.0,465.6 140.0,464.0 160.0,462.5 180.0,461.0 200.0,459.6 220.0,458.2 240.0,456.9 260.0,455.6 280.0,454.3 300.0,453.1 320.0,451.9 340.0,450.8 360.0,449.8 380.0,448.7 400.0,447.7 420.0,446.8 440.0,445.9 460.0,445.1 480.0,444.3 500.0,443.5 520.0,442.8 540.0,442.2 560.0,441.5 580.0,441.0 600.0,440.5 620.0,440.0 640.0,439.5 660.0,439.2 680.0,438.8 700.0,438.5 720.0,438.3 740.0,438.1 760.0,437.9 780.0,437.8 800.0,437.7 820.0,437.7 840.0,437.7 840.0,441.7 820.0,441.7 800.0,441.7 780.0,441.8 760.0,441.9 740.0,442.1 720.0,442.3 700.0,442.5 680.0,442.8 660.0,443.2 640.0,443.5 620.0,444.0 600.0,444.5 580.0,445.0 560.0,445.5 540.0,446.2 520.0,446.8 500.0,447.5 480.0,448.3 460.0,449.1 440.0,449.9 420.0,450.8 400.0,451.7 380.0,452.7 360.0,453.8 340.0,454.8 320.0,455.9 300.0,457.1 280.0,458.3 260.0,459.6 240.0,460.9 220.0,462.2 200.0,463.6 180.0,465.0 160.0,466.5 140.0,468.0 120.0,469.6 100.0,471.2 80.0,472.9 60.0,474.6 40.0,476.4 20.0,478.2 0.0,480.0" fill="#c89040" />
<polygon points="0.0,623.0 20.0,620.1 40.0,617.3 60.0,614.5 80.0,611.8 100.0,609.1 120.0,606.5 140.0,604.0 160.0,601.6 180.0,599.2 200.0,596.8 220.0,594.6 240.0,592.4 260.0,590.2 280.0,588.1 300.0,586.1 320.0,584.2 340.0,582.3 360.0,580.5 380.0,578.7 400.0,577.0 420.0,575.4 440.0,573.9 460.0,572.4 480.0,570.9 500.0,569.5 520.0,568.2 540.0,567.0 560.0,565.8 580.0,564.7 600.0,563.6 620.0,562.7 640.0,561.7 660.0,560.9 680.0,560.1 700.0,559.3 720.0,558.7 740.0,558.1 760.0,557.5 780.0,557.0 800.0,556.6 820.0,556.3 840.0,556.0 840.0,598.0 820.0,597.9 800.0,597.9 780.0,598.0 760.0,598.2 740.0,598.4 720.0,598.8 700.0,599.2 680.0,599.7 660.0,600.3 640.0,601.0 620.0,601.7 600.0,602.6 580.0,603.5 560.0,604.5 540.0,605.6 520.0,606.8 500.0,608.0 480.0,609.4 460.0,610.8 440.0,612.3 420.0,613.9 400.0,615.6 380.0,617.4 360.0,619.2 340.0,621.2 320.0,623.2 300.0,625.3 280.0,627.5 260.0,629.8 240.0,632.1 220.0,634.6 200.0,637.1 180.0,639.7 160.0,642.4 140.0,645.2 120.0,648.1 100.0,651.0 80.0,654.0 60.0,657.1 40.0,660.3 20.0,663.6 0.0,667.0" fill="#80918a" />
<polygon points="0.0,667.0 20.0,663.6 40.0,660.3 60.0,657.1 80.0,654.0 100.0,651.0 120.0,648.1 140.0,645.2 160.0,642.4 180.0,639.7 200.0,637.1 220.0,634.6 240.0,632.1 260.0,629.8 280.0,627.5 300.0,625.3 320.0,623.2 340.0,621.2 360.0,619.2 380.0,617.4 400.0,615.6 420.0,613.9 440.0,612.3 460.0,610.8 480.0,609.4 500.0,608.0 520.0,606.8 540.0,605.6 560.0,604.5 580.0,603.5 600.0,602.6 620.0,601.7 640.0,601.0 660.0,600.3 680.0,599.7 700.0,599.2 720.0,598.8 740.0,598.4 760.0,598.2 780.0,598.0 800.0,597.9 820.0,597.9 840.0,598.0 840.0,777.0 820.0,777.0 800.0,777.0 780.0,777.0 760.0,777.0 740.0,777.0 720.0,777.0 700.0,777.0 680.0,777.0 660.0,777.0 640.0,777.0 620.0,777.0 600.0,777.0 580.0,777.0 560.0,777.0 540.0,777.0 520.0,777.0 500.0,777.0 480.0,777.0 460.0,777.0 440.0,777.0 420.0,777.0 400.0,777.0 380.0,777.0 360.0,777.0 340.0,777.0 320.0,777.0 300.0,777.0 280.0,777.0 260.0,777.0 240.0,777.0 220.0,777.0 200.0,777.0 180.0,777.0 160.0,777.0 140.0,777.0 120.0,777.0 100.0,777.0 80.0,777.0 60.0,777.0 40.0,777.0 20.0,777.0 0.0,777.0" fill="url(#floor)" />
<polygon points="0,718 160,692 322,668 815,633 840,631 840,643 815,645 322,680 160,704 0,731" fill="#3a5888"/>
<rect x="7" y="628" width="22" height="8" fill="#c8ccc4"/>
<polygon points="321,538 757,518 757,531 321,552" fill="#c6a070"/>
<polygon points="321,552 757,531 757,546 321,568" fill="#8e7450"/>
<polygon points="321,566 815,540 815,584 365,604" fill="#b28a5a"/>
<polygon points="321,566 365,604 365,760 321,748" fill="#a08a5c"/>
<polygon points="365,604 815,584 815,705 365,760" fill="#2c2418"/>
<polyline points="321,566 365,604 815,584" fill="none" stroke="#d2b486" stroke-width="2"/>
<rect x="709" y="531" width="22" height="16" fill="#d8d0bc"/>
<rect x="705" y="548" width="31" height="4" fill="#e8e8e0"/>
<rect x="732" y="526" width="25" height="21" fill="#dfe4ea"/>
<rect x="340" y="518" width="12" height="25" rx="3" fill="#b83828"/>
<rect x="342" y="538" width="8" height="5" fill="#2a8a50"/>
<rect x="728" y="497" width="10" height="23" rx="3" fill="#b84a30"/>
<line x1="657" y1="525" x2="718" y2="490" stroke="#1a1a1a" stroke-width="2"/>
<rect x="336" y="540" width="89" height="16" fill="#242426"/>
<rect x="346" y="556" width="5" height="25" fill="#1a1a1c"/>
<rect x="425" y="532" width="16" height="13" fill="#6a60b0"/>
<polygon points="367,712 815,700 840,700 840,777 367,777" fill="#444c48"/>
<rect x="815" y="556" width="25" height="221" fill="#b4bab4"/>
<polygon points="815,633 840,631 840,643 815,645" fill="#3a5888"/>
<rect x="812" y="580" width="8" height="126" fill="#a08a5c"/>
<rect x="512" y="494" width="103.5" height="65" fill="#111316"/>
<rect x="525" y="500" width="77" height="56" fill="#c8def0"/>
<rect x="540" y="510" width="50" height="3" fill="#8aa8c8" opacity="0.6"/>
<path d="M408,700 L408,596 C410,566 422,534 446,518 C466,508 522,508 542,518 C560,530 566,552 568,582 L568,700 Z" fill="#1c2442"/>
<rect x="481" y="495" width="31" height="10" fill="#e0e0e4"/>
<ellipse cx="494" cy="477" rx="18" ry="22" fill="#a07a66"/>
<path d="M476,486 C470,460 480,455 494,455 C509,455 517,461 512,486 C506,476 482,476 476,486 Z" fill="#4a3c2e"/>
<path d="M476,548 Q518,540 561,546 L557,700 Q518,708 480,700 Z" fill="#161618"/>
<path d="M468,690 Q520,680 578,692 L574,716 Q520,726 472,714 Z" fill="#0f0f11"/>
<g stroke="#121214" stroke-width="5" fill="none"><line x1="518" y1="700" x2="518" y2="745"/><line x1="518" y1="745" x2="440" y2="765"/><line x1="518" y1="745" x2="572" y2="768"/><line x1="518" y1="745" x2="505" y2="777"/></g>
<path d="M586,531 Q635,522 684,530 L679,672 Q634,680 590,672 Z" fill="#161618"/>
<path d="M576,655 Q634,646 694,656 L690,690 Q634,702 580,690 Z" fill="#0f0f11"/>
<g stroke="#121214" stroke-width="5" fill="none"><line x1="640" y1="672" x2="640" y2="720"/><line x1="640" y1="720" x2="630" y2="755"/><line x1="640" y1="720" x2="700" y2="745"/><line x1="640" y1="720" x2="585" y2="740"/></g>
<path d="M758,526 Q792,518 826,519 L818,664 L739,664 Z" fill="#161618"/>
<path d="M690,628 Q745,616 800,624 L814,666 Q760,678 708,668 Z" fill="#111113"/>
<g stroke="#121214" stroke-width="5" fill="none"><line x1="760" y1="664" x2="765" y2="700"/><line x1="765" y1="700" x2="818" y2="727"/><line x1="765" y1="700" x2="790" y2="740"/><line x1="765" y1="700" x2="710" y2="720"/></g>
<circle cx="818" cy="728" r="6" fill="#121214"/><circle cx="790" cy="741" r="6" fill="#121214"/><circle cx="642" cy="757" r="6" fill="#121214"/><circle cx="700" cy="746" r="6" fill="#121214"/>
<ellipse cx="635" cy="758" rx="9" ry="5" fill="#c8a020"/>
<path d="M523,777 C530,762 560,756 640,754 L760,754 C800,755 830,760 840,764 L840,777 Z" fill="#6a6448"/>
</svg>
</div>

<div id="rv" class="a"></div>
<div id="page" class="a"></div>
<div id="talk" class="a"></div>
<div id="talkt" class="a">Talking: Senate Hearing Roo...</div>

<svg class="a" id="hand" style="left:1470px;top:244px" width="22" height="18" viewBox="0 0 22 18"><path d="M4,9 C3,7 4,6 5,7 L6,8 L6,3.5 C6,2.5 7.5,2.5 7.5,3.5 L7.5,7 L7.5,2.5 C7.5,1.5 9,1.5 9,2.5 L9,7 L9,2.8 C9,1.8 10.5,1.8 10.5,2.8 L10.5,7 L10.5,4 C10.5,3 12,3 12,4 L12,10 C12,13 10.5,15 8,15 C6,15 5,13.5 4,11 Z" fill="#fff" stroke="#222" stroke-width="1"/><path d="M15,14 L19,14 M17,12 L17,16" stroke="#222" stroke-width="1.2"/></svg>
<!-- document text -->
<div id="docwrap">
<div class="a doc" id="d1" style="left:1225px;top:186px;font-size:28.5px;font-weight:bold">SENATE BILL REPORT</div>
<div class="a doc" id="d2" style="left:1330px;top:221px;font-size:28.5px;font-weight:bold">SB 6056</div>
<div class="a" style="left:1018px;top:263px;width:724px;height:2px;background:#222"></div>
<div class="a" style="left:1018px;top:266px;width:724px;height:2px;background:#555"></div>
<div class="a doc" id="d3" style="left:1294px;top:289px;font-size:17px;letter-spacing:0.73px">As of January 12, 2026</div>
<div class="a doc" id="d4" style="left:1018px;top:330px;font-size:17px;letter-spacing:0.65px"><b>Title:</b>&nbsp; An act relating to exempting utility service vehicles from certain motor vehicle emission</div>
<div class="a doc" id="d5" style="left:1055px;top:351px;font-size:17px;letter-spacing:0.83px">standards.</div>
<div class="a doc" id="d6" style="left:1018px;top:394px;font-size:17px;letter-spacing:0.66px"><b>Brief Description:</b>&nbsp; Exempting utility service vehicles from certain motor vehicle emission</div>
<div class="a doc" id="d7" style="left:1055px;top:414px;font-size:17px;letter-spacing:0.83px">standards.</div>
<div class="a doc" id="d8" style="left:1018px;top:456px;font-size:17px;letter-spacing:0.75px"><b>Sponsors:</b>&nbsp; Senator Boehnke.</div>
<div class="a doc" id="d9" style="left:1018px;top:497px;font-size:17px;letter-spacing:0.83px"><b>Brief History:</b></div>
<div class="a doc" id="d10" style="left:1055px;top:518px;font-size:17px;letter-spacing:0.74px"><b>Committee Activity:</b>&nbsp; Environment, Energy &amp; Technology: 1/13/26.</div>
<div class="a" style="left:1055px;top:560px;width:650px;height:105px;border:2px solid #1e1e1e"></div>
<div class="a" style="left:1059px;top:563px;width:642px;height:99px;border:1.5px solid #2a2a2a"></div>
<div class="a doc" id="d11" style="left:1289px;top:577px;font-size:17px;font-weight:bold;letter-spacing:0.8px">Brief Summary of Bill</div>
<div class="a doc" style="left:1093px;top:606px;font-size:17px">&bull;</div>
<div class="a doc" id="d12" style="left:1112px;top:606px;font-size:17px;letter-spacing:0.7px;word-spacing:2.3px">Requires the Department of Ecology to exempt utility service vehicles</div>
<div class="a doc" id="d13" style="left:1112px;top:627px;font-size:17px;letter-spacing:0.66px">from certain low- and zero-emission vehicle standards.</div>
<div class="a" style="left:1018px;top:686px;width:724px;height:2px;background:#222"></div>
<div class="a doc" id="d14" style="left:1018px;top:693px;font-size:17px;font-weight:bold;letter-spacing:1.12px">SENATE COMMITTEE ON ENVIRONMENT, ENERGY &amp; TECHNOLOGY</div>
<div class="a doc" id="d15" style="left:1055px;top:735px;font-size:17px;letter-spacing:0.72px"><b>Staff:</b>&nbsp; Matt Shepard-Koningsor (786-7627)</div>
</div>

<!-- lower third -->
<div id="l3">
<div class="a" id="bar" style="left:159px;top:916px;width:1761px;height:128px;border-radius:52px 0 0 52px;background:linear-gradient(180deg,#2c5479 0%,#2b5177 45%,#294d73 72%,#25466b 86%,#223e62 100%)"></div>
<div class="a" style="left:1800px;top:916px;width:120px;height:128px;background:linear-gradient(90deg,rgba(34,58,92,0) 0%,rgba(34,58,92,0.55) 100%)"></div>
<div class="a" id="ybar" style="left:216px;top:877px;width:1330px;height:39px;background:#f7df5e;border-top-left-radius:44px 39px"></div>
<div class="a" style="left:1497px;top:910px;width:423px;height:6px;background:#f7df5e"></div>
<div class="a" id="blk" style="left:1497px;top:877px;width:375px;height:33px;background:#050505;border-bottom-left-radius:50px 33px;border-top-right-radius:36px 33px"></div>
<div class="a l3" id="t1" style="left:518px;top:876.5px;font-size:37px;color:#140c06;transform-origin:0 0;transform:scaleX(0.9567)">Senate Environment, Energy &amp; Technology</div>
<div class="a l3" id="t2" style="left:335.5px;top:934.5px;font-size:41px;color:#f4f8fc;transform-origin:0 0;transform:scaleX(0.9268)">January 13, 2026, 1:30 pm - Senate Hearing Rm 1 and Virtual</div>
<div class="a l3" id="t3" style="left:247.5px;top:990px;font-size:41px;color:#d6dee8;transform-origin:0 0;transform:scaleX(0.919)">visions for consumer-owned utilities, including port districts, and affected r</div>
<div class="a l3" id="t4" style="left:1533.5px;top:877.5px;font-size:32px;color:#fbfbfb;transform-origin:0 0;transform:scaleX(0.9185)">01/13/26 03:06:32 PM</div>
<svg class="a" id="logo" style="left:1610px;top:910px" width="160" height="140" viewBox="0 0 160 140">
<defs>
<linearGradient id="disk" x1="0" y1="0" x2="0.75" y2="1">
<stop offset="0" stop-color="#f4f4f0"/><stop offset="0.3" stop-color="#dcdcd8"/><stop offset="0.55" stop-color="#b0aeaa"/><stop offset="0.8" stop-color="#6e6862"/><stop offset="1" stop-color="#403c3a"/>
</linearGradient>
<linearGradient id="ring" x1="0" y1="0" x2="1" y2="1">
<stop offset="0" stop-color="#e4e8ec"/><stop offset="0.5" stop-color="#9aa4ae"/><stop offset="1" stop-color="#dfe6ea"/>
</linearGradient>
<linearGradient id="let" x1="0" y1="0" x2="0" y2="1">
<stop offset="0" stop-color="#f0f2f4"/><stop offset="0.6" stop-color="#c0c6cc"/><stop offset="1" stop-color="#8e969e"/>
</linearGradient>
</defs>
<circle cx="71" cy="70" r="59" fill="none" stroke="#1c3150" stroke-width="6" opacity="0.5"/>
<circle cx="71" cy="70" r="60" fill="none" stroke="url(#ring)" stroke-width="3.5"/>
<circle cx="71" cy="69.5" r="47" fill="url(#disk)"/>
<path d="M 118 72 A 47 47 0 0 1 40 104" fill="none" stroke="#2a3038" stroke-width="2" opacity="0.7"/>
<g stroke="#5a524c" stroke-width="1.2" opacity="0.45"><line x1="58" y1="96" x2="58" y2="114"/><line x1="66" y1="96" x2="66" y2="116"/><line x1="74" y1="95" x2="74" y2="116"/><line x1="82" y1="95" x2="82" y2="115"/><line x1="90" y1="93" x2="90" y2="112"/></g>
<path d="M41 55 L61 58 L61 46 L104 46 L104 85 L100 92 L76 92 L64 96 L58 88 L50 86 Z" fill="#2a5077"/>
<rect x="61" y="50" width="92" height="36" fill="#2b5178"/>
<text x="72" y="79" font-family="Liberation Sans" font-weight="bold" font-size="29" fill="url(#let)">T</text>
<text x="96" y="79" font-family="Liberation Sans" font-weight="bold" font-size="29" fill="url(#let)">V</text>
<text x="124" y="79" font-family="Liberation Sans" font-weight="bold" font-size="29" fill="url(#let)">W</text>
</svg>
</div>

</body></html>
